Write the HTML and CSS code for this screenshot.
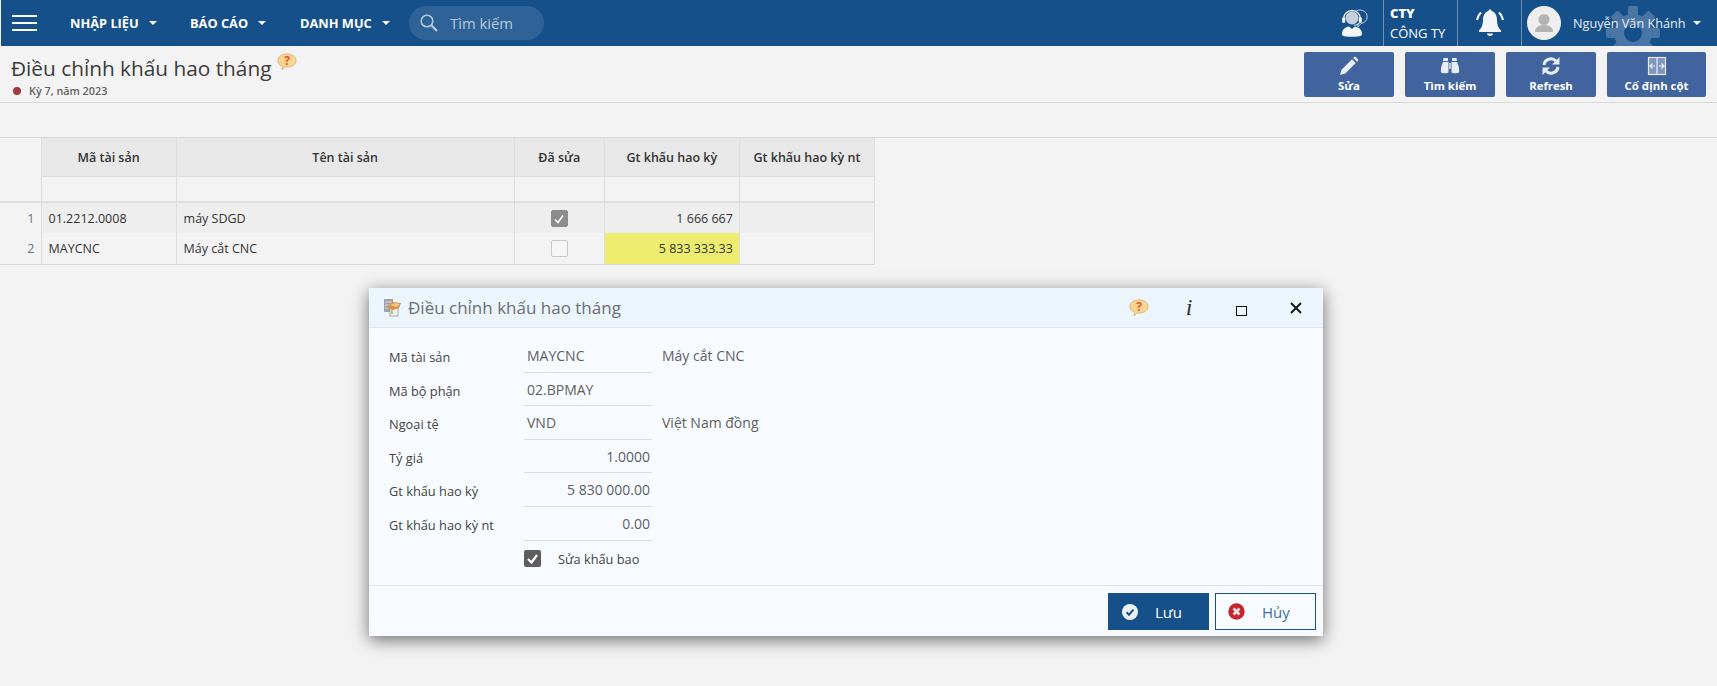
FILE: index.html
```html
<!DOCTYPE html>
<html lang="vi">
<head>
<meta charset="utf-8">
<title>Điều chỉnh khấu hao tháng</title>
<link rel="stylesheet" href="styles.css">
</head>
<body>
<header class="topbar">
  <button class="burger" aria-label="menu"><span></span><span></span><span></span></button>
  <nav class="nav">
    <a class="nav-item nav-a">NHẬP LIỆU<i class="caret"></i></a>
    <a class="nav-item nav-b">BÁO CÁO<i class="caret"></i></a>
    <a class="nav-item nav-c">DANH MỤC<i class="caret"></i></a>
  </nav>
  <div class="search">
    <svg width="18" height="18" viewBox="0 0 18 18" fill="none" stroke="#b4c6da" stroke-width="1.6"><circle cx="7" cy="7" r="5.8"/><path d="M11.500 11.500l5.500 5.500" stroke-width="2.400"/></svg>
    <span>Tìm kiếm</span>
  </div>
  <div class="top-right">
    <svg class="gear" width="56" height="46" viewBox="0 0 56 46">
      <g fill="#4a76a5">
        <circle cx="28" cy="33" r="19"/>
        <rect x="23" y="6" width="10" height="54" rx="2"/>
        <rect x="23" y="6" width="10" height="54" rx="2" transform="rotate(45 28 33)"/>
        <rect x="23" y="6" width="10" height="54" rx="2" transform="rotate(90 28 33)"/>
        <rect x="23" y="6" width="10" height="54" rx="2" transform="rotate(135 28 33)"/>
      </g>
      <circle cx="28" cy="33" r="9" fill="#16508a"/>
    </svg>
    <div class="top-cell support">
      <svg width="30" height="30" viewBox="0 0 30 30">
        <path d="M15 3.500c2-1.500 5-2 7.500-1 3.500 1.200 5 4 4.700 7-.3 3-2.700 5.500-6.200 6l-3 3.500v-4" fill="none" stroke="#c3d1e0" stroke-width="1"/>
        <circle cx="12" cy="10" r="6.500" fill="#c5d0dc"/>
        <path d="M3.500 11a8.500 8.500 0 0 1 17 0" fill="none" stroke="#eef2f6" stroke-width="1.400"/>
        <rect x="2.200" y="9" width="3" height="6" rx="1.500" fill="#f4f6f8"/>
        <rect x="18.800" y="9" width="3" height="6" rx="1.500" fill="#f4f6f8"/>
        <path d="M19.500 15c-1 1.500-3 2.200-5.500 2.200" fill="none" stroke="#f4f6f8" stroke-width="1"/>
        <path d="M2 26c0-5 4-7 7-7.500l3 2.500 3-2.500c3 .5 7 2.500 7 7.500 0 1-.5 1.500-1 1.700-3 1.300-16 1.300-18 0-.5-.2-1-.7-1-1.700z" fill="#f4f5f7"/>
      </svg>
    </div>
    <div class="top-cell company"><b>CTY</b><span>CÔNG TY</span></div>
    <div class="top-cell bell">
      <svg width="30" height="30" viewBox="0 0 30 30">
        <path d="M15 1.500c-.9 0-1.600.7-1.600 1.600C9.500 4.300 8 8 8 12c0 5-1.500 8-4 10.500V24h22v-1.500c-2.500-2.500-4-5.500-4-10.500 0-4-1.500-7.700-5.400-8.900 0-.9-.7-1.600-1.600-1.600z" fill="#f4f5f7"/>
        <path d="M12 25.500h6c0 1.500-1.300 2.500-3 2.500s-3-1-3-2.500z" fill="#f4f5f7"/>
        <path d="M6 4.500C3.800 6.500 2.500 9 2 12M24 4.500c2.200 2 3.500 4.500 4 7.500" fill="none" stroke="#f4f5f7" stroke-width="2.200"/>
      </svg>
    </div>
    <div class="top-cell user">
      <span class="avatar">
        <svg width="34" height="34" viewBox="0 0 34 34"><circle cx="17" cy="17" r="17" fill="#eeeeee"/><circle cx="17" cy="13.500" r="5.500" fill="#b3b3b3"/><path d="M8 26c0-5 4-7 9-7s9 2 9 7z" fill="#b3b3b3"/></svg>
      </span>
      <span class="user-name">Nguyễn Văn Khánh</span><i class="caret"></i>
    </div>
  </div>
</header>

<section class="pagehead">
  <div class="heading">
    <div class="title-line">
      <h1>Điều chỉnh khấu hao tháng</h1>
      <svg class="help help-page" width="20" height="18" viewBox="0 0 20 18"><path d="M10 1c5 0 9 2.500 9 6.500S15 14 10 14H8l-3 3 .5-3.800C2.500 12.500 1 10 1 7.500 1 3.500 5 1 10 1z" fill="#fbd58d" stroke="#d8b98a"/><text x="10" y="12" text-anchor="middle" class="help-q">?</text></svg>
    </div>
    <div class="period"><i class="dot"></i>Kỳ 7, năm 2023</div>
  </div>
  <div class="actions">
    <a class="act">
      <svg width="20" height="20" viewBox="0 0 20 20" fill="#e9edf4"><path d="M1 19l1.500-5.300L13 3.200l3.800 3.800L6.300 17.500z"/><path d="M14.200 2l.9-.9c.5-.5 1.200-.5 1.700 0l2.100 2.100c.5.500.5 1.200 0 1.700l-.9.900z"/></svg>
      <span>Sửa</span>
    </a>
    <a class="act">
      <svg width="20" height="20" viewBox="0 0 20 20" fill="#e9edf4"><path d="M3.500 2h4.500v3H3zM12 2h4.500l.5 3h-5z"/><path d="M3 6h5.500v10.500C7 17.500 3 17.500 1 16.500.5 13 1.500 9 3 6zM11.500 6H17c1.500 3 2.500 7 2 10.500-2 1-6 1-7.500 0zM9.300 7h1.400v6H9.300z"/></svg>
      <span>Tìm kiếm</span>
    </a>
    <a class="act">
      <svg width="20" height="20" viewBox="0 0 20 20" fill="none" stroke="#e9edf4" stroke-width="3"><path d="M3 9a7 7 0 0 1 12-4"/><path d="M17 11a7 7 0 0 1-12 4"/><path d="M18.500 1v7.500H11zM1.500 19v-7.500H9z" fill="#e9edf4" stroke="none"/></svg>
      <span>Refresh</span>
    </a>
    <a class="act act-wide">
      <svg width="20" height="20" viewBox="0 0 20 20" fill="none" stroke="#e9edf4" stroke-width="1.200"><rect x="1.500" y="1.500" width="17" height="17" fill="#7f97bf" stroke="#e9edf4"/><path d="M10 1.500v17" /><path d="M3 10h5M5.500 7.500L3 10l2.500 2.500M17 10h-5M14.500 7.500L17 10l-2.500 2.500"/></svg>
      <span>Cố định cột</span>
    </a>
  </div>
</section>

<div class="toolbar-gap"></div>

<table class="grid">
  <colgroup><col class="c0"><col class="c1"><col class="c2"><col class="c3"><col class="c4"><col class="c5"></colgroup>
  <thead>
    <tr class="hd"><th class="corner" rowspan="2"></th><th>Mã tài sản</th><th>Tên tài sản</th><th>Đã sửa</th><th>Gt khấu hao kỳ</th><th>Gt khấu hao kỳ nt</th></tr>
    <tr class="filter"><td></td><td></td><td></td><td></td><td></td></tr>
  </thead>
  <tbody>
    <tr class="odd"><td class="num">1</td><td>01.2212.0008</td><td>máy SDGD</td><td class="ck"><span class="box box-on"><svg width="12" height="12" viewBox="0 0 12 12" fill="none" stroke="#fff" stroke-width="1.600"><path d="M2 6.500l3 3 5-7"/></svg></span></td><td class="r">1 666 667</td><td></td></tr>
    <tr class="even"><td class="num">2</td><td>MAYCNC</td><td>Máy cắt CNC</td><td class="ck"><span class="box"></span></td><td class="r yellow">5 833 333.33</td><td></td></tr>
  </tbody>
</table>

<div class="dialog">
  <div class="dlg-head">
    <svg class="dlg-icon" width="19" height="19" viewBox="0 0 19 19"><rect x="1" y="1" width="9" height="13" fill="#a0a4a8"/><path d="M2 4h7M2 7h7M2 10h7" stroke="#e4e6e8" stroke-width=".8"/><rect x="7" y="10" width="8" height="8" fill="#f1f1e6" stroke="#8c8c8c" stroke-width=".7"/><path d="M9 12v4" stroke="#5aa55a"/><path d="M4 9l5-5 9 1-2 5-6 2-4-1z" fill="#d9924a"/><path d="M7 7l5-2 5 1-3 3z" fill="#f4c68c"/></svg>
    <span class="dlg-title">Điều chỉnh khấu hao tháng</span>
    <div class="dlg-tools">
      <svg class="help" width="20" height="18" viewBox="0 0 20 18"><path d="M10 1c5 0 9 2.500 9 6.500S15 14 10 14H8l-3 3 .5-3.800C2.500 12.500 1 10 1 7.500 1 3.500 5 1 10 1z" fill="#fbd58d" stroke="#d8b98a"/><text x="10" y="12" text-anchor="middle" class="help-q">?</text></svg>
      <span class="tool-i">i</span>
      <span class="tool-max"></span>
      <svg class="tool-x" width="12" height="12" viewBox="0 0 12 12" stroke="#111" stroke-width="1.800"><path d="M1 1l10 10M11 1L1 11"/></svg>
    </div>
  </div>
  <div class="dlg-body">
    <div class="row"><label>Mã tài sản</label><div class="field">MAYCNC</div><div class="desc">Máy cắt CNC</div></div>
    <div class="row"><label>Mã bộ phận</label><div class="field">02.BPMAY</div></div>
    <div class="row"><label>Ngoại tệ</label><div class="field">VND</div><div class="desc">Việt Nam đồng</div></div>
    <div class="row"><label>Tỷ giá</label><div class="field right">1.0000</div></div>
    <div class="row"><label>Gt khấu hao kỳ</label><div class="field right">5 830 000.00</div></div>
    <div class="row"><label>Gt khấu hao kỳ nt</label><div class="field right">0.00</div></div>
    <div class="row-check"><span class="dlg-box"><svg width="13" height="13" viewBox="0 0 13 13" fill="none" stroke="#fff" stroke-width="2.200"><path d="M2 7l3.500 3.500L11 3"/></svg></span><span>Sửa khấu bao</span></div>
  </div>
  <div class="dlg-foot">
    <button class="btn btn-save">
      <svg width="16" height="16" viewBox="0 0 16 16"><circle cx="8" cy="8" r="8" fill="#eef2f7"/><path d="M4.500 8.200l2.500 2.500 4.500-5" fill="none" stroke="#16508a" stroke-width="2"/></svg>
      <span>Lưu</span>
    </button>
    <button class="btn btn-cancel">
      <svg width="17" height="17" viewBox="0 0 17 17"><circle cx="8.500" cy="8.500" r="8.200" fill="#c5252c"/><path d="M5.500 5.500l6 6M11.500 5.500l-6 6" stroke="#f6e3e3" stroke-width="2.600"/></svg>
      <span>Hủy</span>
    </button>
  </div>
</div>
</body>
</html>
```

FILE: styles.css
```css
* { box-sizing: border-box; }
html, body { margin: 0; padding: 0; }
body {
  height: 686px;
  overflow: hidden;
  position: relative;
  background: #f3f3f3;
  font-family: "Open Sans", "Noto Sans", sans-serif;
  color: #333;
}

/* top bar */
.topbar {
  height: 46px;
  margin-left: 1px;
  background: #16508a;
  display: flex;
  align-items: center;
  color: #fff;
  position: relative;
}
.burger {
  width: 25px;
  height: 16px;
  margin-left: 11px;
  padding: 0;
  background: none;
  border: 0;
  display: flex;
  flex-direction: column;
  justify-content: space-between;
}
.burger span { display: block; height: 2px; background: #fff; }
.nav { display: flex; margin-left: 33px; }
.nav-item {
  font-size: 12.800px;
  font-weight: 700;
  display: flex;
  align-items: center;
  white-space: nowrap;
}
.nav-a { width: 120px; }
.nav-b { width: 110px; }
.nav-c { width: 109px; }
.caret {
  display: inline-block;
  width: 0;
  height: 0;
  margin-left: 10px;
  border-left: 4px solid transparent;
  border-right: 4px solid transparent;
  border-top: 4px solid #fff;
}
.search {
  width: 135px;
  height: 34px;
  border-radius: 17px;
  background: #2f6398;
  display: flex;
  align-items: center;
  padding-left: 11px;
  gap: 12px;
  font-size: 14.800px;
  color: #b9c9da;
}
.top-right { margin-left: auto; display: flex; height: 46px; position: relative; }
.top-cell { height: 46px; display: flex; align-items: center; position: relative; z-index: 1; }
.support { width: 43px; }
.company {
  width: 74px;
  flex-direction: column;
  align-items: flex-start;
  justify-content: center;
  padding-left: 6px;
  border-left: 1px solid #6c90b5;
  font-size: 13px;
  line-height: 20px;
}
.company b { font-weight: 800; }
.bell { width: 64px; padding-left: 17px; border-left: 1px solid #6c90b5; }
.user { border-left: 1px solid #6c90b5; padding-left: 5px; width: 196px; font-size: 12.700px; color: #e8eef5; }
.avatar { width: 34px; height: 34px; display: block; }
.avatar svg { display: block; }
.user-name { margin-left: 12px; white-space: nowrap; }
.user .caret { margin-left: 7px; }
.gear { position: absolute; right: 56px; top: 0; }

/* page heading */
.pagehead {
  height: 57px;
  display: flex;
  justify-content: space-between;
  border-bottom: 1px solid #d8d8d8;
}
.heading { padding: 6px 0 0 11px; }
.title-line { display: flex; align-items: flex-start; height: 32px; }
h1 {
  margin: 0;
  font-size: 20.800px;
  font-weight: 500;
  line-height: 32px;
  color: #3b3b3b;
  white-space: nowrap;
}
.help-page { margin: 1px 0 0 6px; }
.help-q { font: 700 12px "Open Sans", sans-serif; fill: #e2592c; }
.period {
  display: flex;
  align-items: center;
  font-size: 10.800px;
  font-weight: 600;
  color: #5f5f5f;
  line-height: 14px;
}
.dot { width: 8px; height: 8px; border-radius: 50%; background: #a23a42; margin: 0 8px 0 2px; }
.actions { display: flex; gap: 11px; padding: 6px 11px 0 0; }
.act {
  width: 90px;
  height: 45px;
  border-radius: 2px;
  background: #41639e;
  color: #fff;
  font-size: 11.400px;
  font-weight: 700;
  display: flex;
  flex-direction: column;
  align-items: center;
  padding-top: 4px;
  line-height: 16px;
}
.act svg { display: block; margin-bottom: 2px; }
.act-wide { width: 99px; }

.toolbar-gap { height: 35px; border-bottom: 1px solid #d8d8d8; }

/* grid */
.grid {
  border-collapse: collapse;
  table-layout: fixed;
  width: 875px;
  font-size: 12.500px;
  color: #333;
}
.c0 { width: 41px; }
.c1 { width: 135px; }
.c2 { width: 338px; }
.c3 { width: 90px; }
.c4 { width: 135px; }
.c5 { width: 135px; }
.grid th, .grid td { border: 1px solid #dedede; padding: 0 6px; white-space: nowrap; }
.grid td { border-top: 0; border-bottom: 0; }
.grid th { font-weight: 600; background: #e8e8e8; height: 38px; padding-top: 2px; color: #333; border-top: 0; }
.grid .corner { background: #f3f3f3; border-left: 0; border-bottom: 2px solid #dedede; }
.filter td { height: 26px; background: #f3f3f3; border-bottom: 2px solid #dedede; }
.odd td { height: 31px; background: #eeeeee; }
.even td { height: 31px; background: #f3f3f3; border-bottom: 1px solid #d8d8d8; }
.grid .num { text-align: right; color: #5f7488; background: #f3f3f3; border-left: 0; }
.grid .r { text-align: right; }
.grid .yellow { background: #eeec6e; }
.grid .ck { text-align: center; }
.grid td:nth-child(2) { padding-left: 7px; }
.grid td:nth-child(3) { padding-left: 7px; }
.box {
  display: inline-flex;
  align-items: center;
  justify-content: center;
  width: 17px;
  height: 17px;
  border: 1px solid #c9c9c9;
  border-radius: 2px;
  vertical-align: middle;
  background: #f6f6f6;
}
.box-on { background: #8c8c8c; border-color: #8c8c8c; }

/* dialog */
.dialog {
  position: absolute;
  left: 369px;
  top: 288px;
  width: 954px;
  height: 348px;
  background: #f7fbff;
  box-shadow: 0 4px 16px rgba(0, 0, 0, .55);
  display: flex;
  flex-direction: column;
}
.dlg-head {
  height: 40px;
  background: #ecf5fc;
  border-bottom: 1px solid #dfe5ea;
  display: flex;
  align-items: center;
  padding-left: 14px;
}
.dlg-title { margin-left: 6px; font-size: 17px; color: #6b6f75; white-space: nowrap; }
.dlg-tools { margin-left: auto; display: flex; align-items: center; height: 100%; }
.dlg-tools .help { margin-right: 30px; }
.tool-i { font: italic 24px "Liberation Serif", serif; color: #333; width: 20px; margin-right: 37px; text-align: center; }
.tool-max { width: 11px; height: 10px; border: 1.500px solid #111; margin: 6px 43px 0 0; }
.tool-x { margin-right: 21px; }

.dlg-body { flex: 1; padding: 11px 0 0 20px; border-bottom: 1px solid #e1e5e8; font-size: 12.800px; color: #4a4a4a; }
.row { display: flex; height: 33.600px; }
.row label { width: 135px; padding-top: 9px; line-height: 18px; color: #444; }
.field {
  width: 128px;
  height: 100%;
  padding: 7px 2px 0 3px;
  line-height: 20px;
  font-size: 14px;
  border-bottom: 1px solid #dddddd;
  color: #606060;
}
.right { text-align: right; }
.desc { margin-left: 10px; padding-top: 7px; line-height: 20px; font-size: 14px; color: #606060; }
.row-check { display: flex; align-items: center; height: 28px; margin: 4px 0 0 135px; gap: 17px; color: #444; }
.dlg-box {
  width: 17px;
  height: 17px;
  border-radius: 2px;
  background: #5e5e5e;
  display: flex;
  align-items: center;
  justify-content: center;
}

.dlg-foot { height: 50px; display: flex; justify-content: flex-end; gap: 6px; padding: 7px 7px 0 0; }
.btn {
  width: 101px;
  height: 37px;
  font: 15px "Open Sans", sans-serif;
  display: flex;
  align-items: center;
  padding: 0 0 0 14px;
  gap: 17px;
}
.btn-save { background: #16508a; color: #fff; border: 0; }
.btn-cancel { background: #f7fbff; color: #3f6fa3; border: 1px solid #16508a; padding-left: 12px; }
```
